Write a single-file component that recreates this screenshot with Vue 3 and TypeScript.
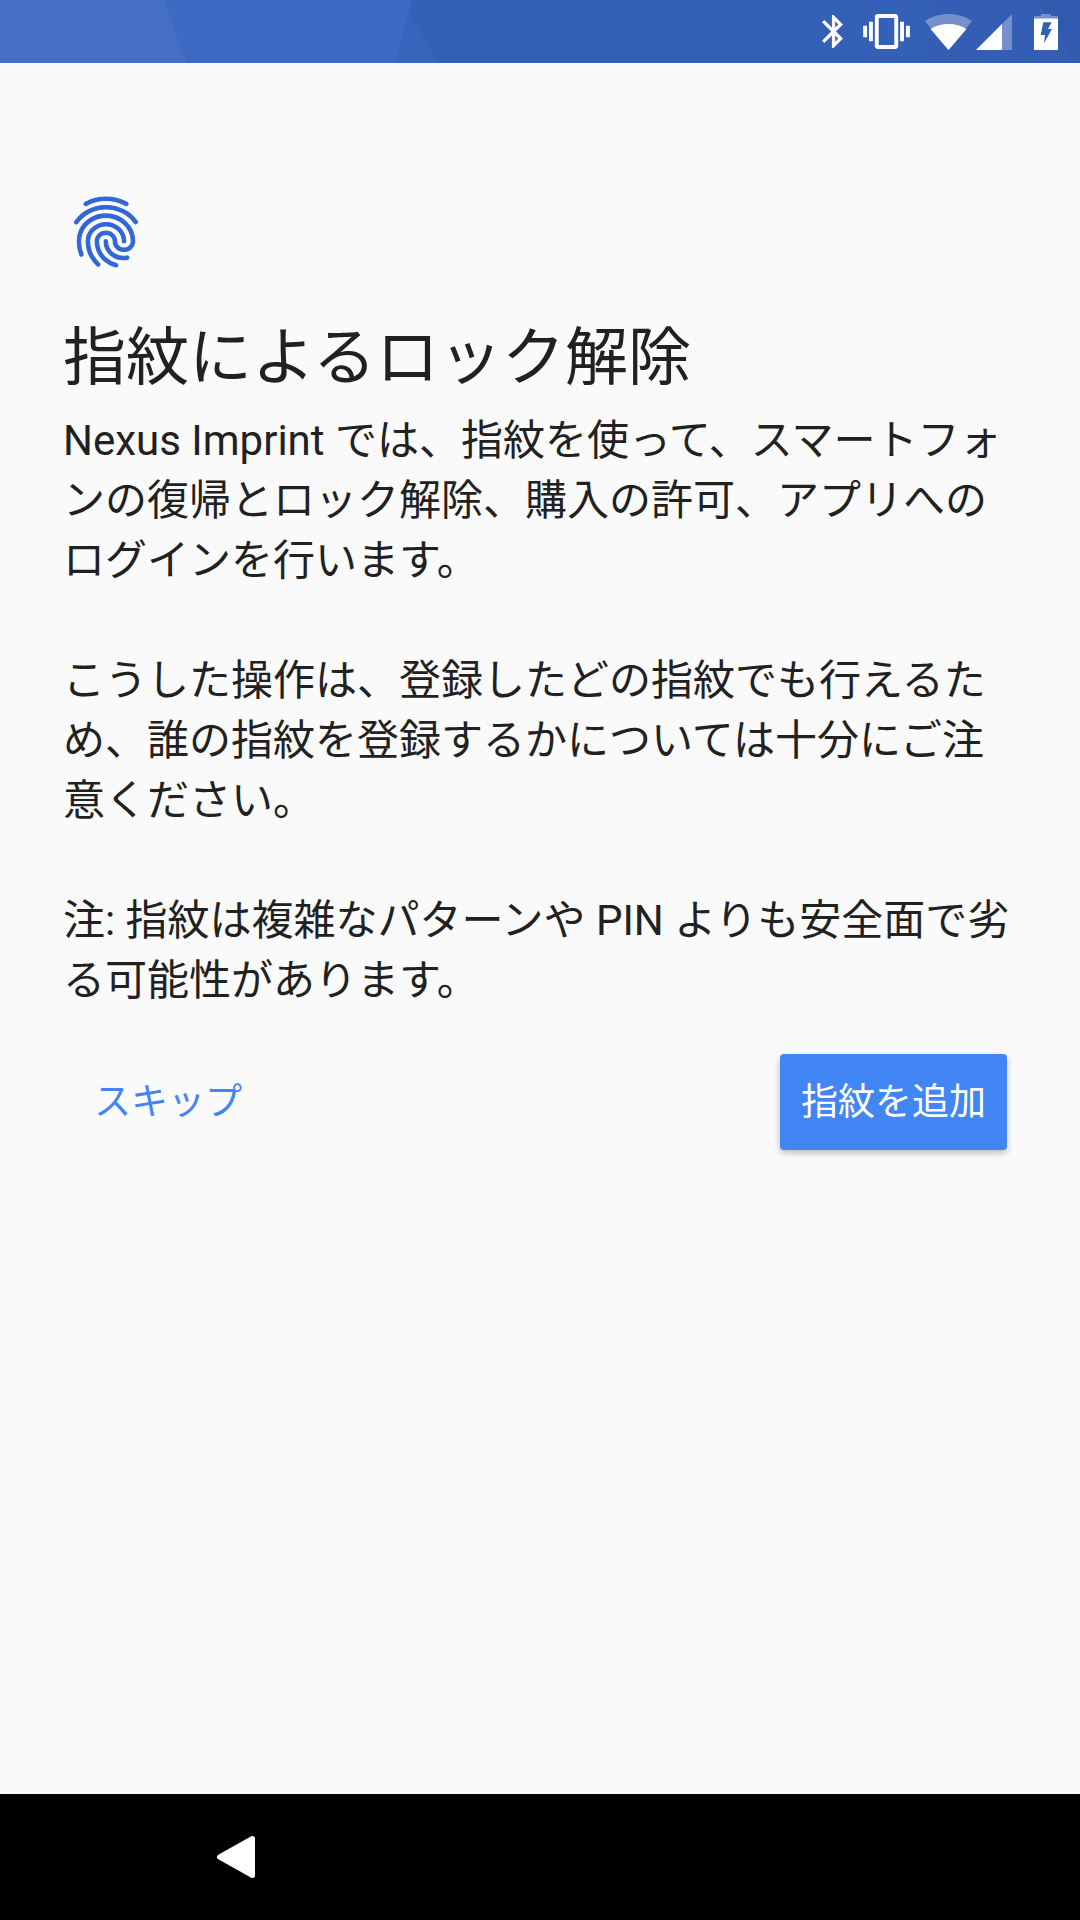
<script setup lang="ts">
const paragraphs: string[][] = [
  ['Nexus Imprint では、指紋を使って、スマートフォ', 'ンの復帰とロック解除、購入の許可、アプリへの', 'ログインを行います。'],
  ['こうした操作は、登録したどの指紋でも行えるた', 'め、誰の指紋を登録するかについては十分にご注', '意ください。'],
  ['注: 指紋は複雑なパターンや PIN よりも安全面で劣', 'る可能性があります。'],
]
</script>

<template>
  <div class="screen">
    <header class="status">
      <svg class="status-bg" viewBox="0 0 1080 63" preserveAspectRatio="none" aria-hidden="true">
        <rect width="1080" height="63" fill="#3560b8" />
        <polygon points="0,0 412,0 395,63 0,63" fill="#3f6ac3" />
        <polygon points="0,0 164,0 187,63 0,63" fill="#456fc5" />
        <polygon points="412,0 410,15 438,63 395,63" fill="#3965bd" />
        <polygon points="937,0 1037,0 1075,63 923,63" fill="#335eb4" />
        <polygon points="1037,0 1080,0 1080,63 1075,63" fill="#305aae" />
      </svg>
      <div class="status-icons">
        <svg class="bt" width="21" height="33" viewBox="5 2 12.71 20" aria-hidden="true">
          <path fill="#fff" d="M17.71 7.71L12 2h-1v7.59L6.41 5 5 6.41 10.59 12 5 17.59 6.41 19 11 14.41V22h1l5.71-5.71-4.3-4.29 4.3-4.29zM13 5.83l1.88 1.88L13 9.59V5.83zm1.88 10.46L13 18.17v-3.76l1.88 1.88z" />
        </svg>
        <svg class="vib" width="47" height="35" viewBox="0 3 24 18" aria-hidden="true">
          <path fill="#fff" d="M0 15h2V9H0v6zm3 2h2V7H3v10zm19-8v6h2V9h-2zm-3 8h2V7h-2v10zM16.500 3h-9C6.670 3 6 3.670 6 4.500v15c0 .83.67 1.500 1.500 1.500h9c.83 0 1.500-.67 1.500-1.500v-15c0-.83-.67-1.500-1.500-1.500zM16 19H8V5h8v14z" />
        </svg>
        <svg class="wifi" width="47" height="36" viewBox="0 0 47 36" aria-hidden="true">
          <path d="M0 7C7 2.500 15 0 23.500 0S40 2.500 47 7L23.500 36Z" fill="#fff" fill-opacity="0.32" />
          <path d="M5.500 15C11 11.500 17 10 23.500 10S36 11.500 41.500 15L23.500 36Z" fill="#fff" />
        </svg>
        <svg class="signal" width="36" height="36" viewBox="0 0 36 36" aria-hidden="true">
          <polygon points="0,36 36,0 36,36" fill="#fff" fill-opacity="0.32" />
          <polygon points="0,36 26,10 26,36" fill="#fff" />
        </svg>
        <svg class="batt" width="24" height="36" viewBox="0 0 24 36" aria-hidden="true">
          <path d="M7 0H17V2H24V36H0V2H7Z" fill="#fff" fill-opacity="0.32" />
          <path d="M0 4.500H24V36H0Z" fill="#fff" />
          <path d="M9.300 8.300H17.700L14 15H18L10 29.300 11 21H6.700Z" fill="#3560b8" />
        </svg>
      </div>
    </header>

    <main class="content">
      <svg class="fp" width="84" height="84" viewBox="0 0 24 24" aria-hidden="true">
        <path fill="#3367d6" stroke="#3367d6" stroke-width="0.3" d="M17.810 4.470c-.08 0-.16-.02-.23-.06C15.660 3.420 14 3 12.010 3c-1.980 0-3.860.47-5.570 1.410-.24.13-.54.04-.68-.2-.13-.24-.04-.55.2-.68C7.820 2.520 9.860 2 12.010 2c2.130 0 3.990.47 6.030 1.520.25.13.34.43.21.67-.09.18-.26.28-.44.28zM3.500 9.720c-.1 0-.2-.03-.29-.09-.23-.16-.28-.47-.12-.7.99-1.400 2.250-2.500 3.750-3.270C9.980 4.040 14 4.030 17.150 5.650c1.500.77 2.760 1.860 3.750 3.250.16.22.11.54-.12.7-.23.16-.54.11-.7-.12-.9-1.260-2.040-2.250-3.390-2.940-2.870-1.470-6.540-1.470-9.400.01-1.360.7-2.500 1.700-3.400 2.960-.08.14-.23.21-.39.21zm6.250 12.070c-.13 0-.26-.05-.35-.15-.87-.87-1.340-1.430-2.010-2.640-.69-1.230-1.050-2.730-1.050-4.340 0-2.970 2.540-5.390 5.660-5.390s5.660 2.420 5.660 5.390c0 .28-.22.5-.5.5s-.5-.22-.5-.5c0-2.420-2.090-4.390-4.660-4.390-2.570 0-4.660 1.970-4.660 4.390 0 1.440.32 2.770.93 3.850.64 1.150 1.080 1.640 1.850 2.420.19.2.19.51 0 .71-.11.1-.24.15-.37.15zm7.170-1.850c-1.190 0-2.240-.3-3.100-.89-1.490-1.010-2.380-2.650-2.380-4.390 0-.28.22-.5.5-.5s.5.22.5.5c0 1.410.72 2.740 1.940 3.560.71.48 1.540.71 2.540.71.24 0 .64-.03 1.040-.1.27-.05.53.13.58.41.05.27-.13.53-.41.58-.57.11-1.070.12-1.210.12zM14.910 22c-.04 0-.09-.01-.13-.02-1.590-.44-2.630-1.030-3.720-2.100-1.400-1.390-2.170-3.240-2.170-5.220 0-1.620 1.380-2.940 3.080-2.940 1.700 0 3.080 1.320 3.080 2.940 0 1.070.93 1.940 2.080 1.940s2.080-.87 2.080-1.940c0-3.770-3.250-6.830-7.250-6.830-2.840 0-5.440 1.580-6.610 4.030-.39.81-.59 1.760-.59 2.800 0 .78.07 2.010.67 3.610.1.26-.03.55-.29.64-.26.1-.55-.04-.64-.29-.49-1.310-.73-2.610-.73-3.960 0-1.200.23-2.290.68-3.240 1.330-2.790 4.280-4.600 7.510-4.600 4.550 0 8.250 3.510 8.250 7.830 0 1.620-1.380 2.940-3.080 2.940s-3.080-1.320-3.080-2.940c0-1.070-.93-1.940-2.080-1.940s-2.080.87-2.080 1.940c0 1.710.66 3.310 1.870 4.510.95.94 1.860 1.460 3.270 1.850.27.07.42.35.35.61-.05.23-.26.38-.47.38z" />
      </svg>
      <h1 class="title">指紋によるロック解除</h1>
      <div class="body">
        <p v-for="(lines, i) in paragraphs" :key="i" class="para">
          <span v-for="(line, j) in lines" :key="j" class="line">{{ line }}</span>
        </p>
      </div>
      <div class="actions">
        <button class="btn-text" type="button">スキップ</button>
        <button class="btn-primary" type="button">指紋を追加</button>
      </div>
    </main>

    <footer class="nav">
      <svg class="back" width="44" height="46" viewBox="0 0 44 46" aria-hidden="true">
        <path d="M38.500 4.500V41.500L5.500 23Z" fill="#fff" stroke="#fff" stroke-width="5" stroke-linejoin="round" />
      </svg>
    </footer>
  </div>
</template>

<style>
html, body { margin: 0; background: #fafafa; }
</style>

<style scoped>
.screen {
  width: 1080px;
  height: 1920px;
  display: flex;
  flex-direction: column;
  background: #fafafa;
  overflow: hidden;
  font-family: Roboto, "Noto Sans CJK JP", sans-serif;
}
.status {
  position: relative;
  height: 63px;
  flex: none;
  display: flex;
  justify-content: flex-end;
  align-items: center;
}
.status-bg {
  position: absolute;
  inset: 0;
  width: 100%;
  height: 100%;
}
.status-icons {
  position: relative;
  display: flex;
  align-items: center;
  padding-right: 22px;
}
.status-icons svg { display: block; }
.vib { margin-left: 20px; }
.wifi { margin-left: 15px; }
.signal { margin-left: 4px; }
.batt { margin-left: 22px; }
.content {
  flex: 1;
  padding: 127px 64px 0 63px;
  display: flex;
  flex-direction: column;
}
.fp { display: block; margin-left: 1px; }
.title {
  margin: 46px 0 0;
  font-size: 63px;
  line-height: 76px;
  font-weight: 400;
  color: #212121;
  white-space: nowrap;
}
.body {
  margin-top: 15px;
  display: flex;
  flex-direction: column;
  gap: 60px;
}
.para { margin: 0; }
.line {
  display: block;
  font-size: 42px;
  line-height: 60px;
  color: #212121;
  white-space: nowrap;
}
.actions {
  margin-top: 43px;
  padding-right: 9px;
  display: flex;
  justify-content: space-between;
  align-items: center;
}
.btn-text {
  border: 0;
  background: none;
  padding: 0 32px 6px 31px;
  font: inherit;
  font-size: 37px;
  color: #4285f4;
}
.btn-primary {
  border: 0;
  height: 96px;
  width: 227px;
  padding: 0 0 6px;
  border-radius: 4px;
  background: #4285f4;
  color: #fff;
  font: inherit;
  font-size: 37px;
  box-shadow: 0 3px 6px rgba(0, 0, 0, 0.25);
}
.nav {
  height: 126px;
  flex: none;
  background: #000;
  display: flex;
  align-items: center;
  padding-left: 214px;
}
.back { display: block; }
</style>
